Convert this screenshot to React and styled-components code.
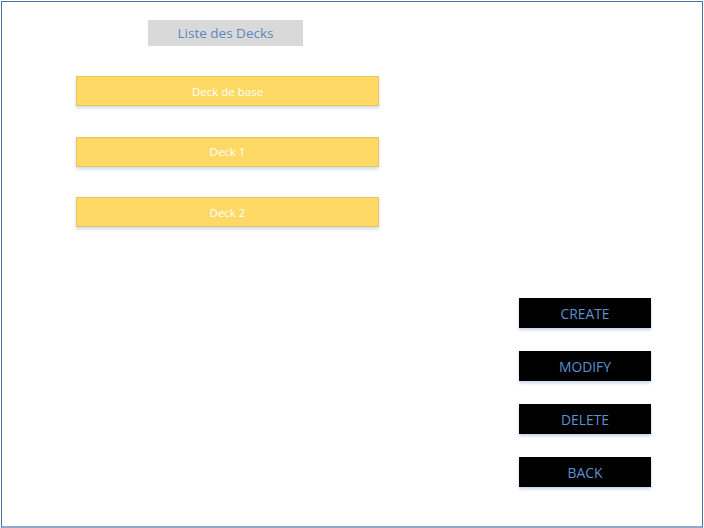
import React from "react";
import styled, { createGlobalStyle } from "styled-components";

const GlobalStyle = createGlobalStyle`
  html, body {
    margin: 0;
    padding: 0;
    background: #ffffff;
  }
  body {
    font-family: "Open Sans", "Liberation Sans", sans-serif;
  }
`;

const Frame = styled.div`
  box-sizing: border-box;
  width: 702px;
  height: 527px;
  margin: 1px 0 0 1px;
  border: 1px solid #4a74a0;
  border-bottom: 2px solid #8eaacb;
  display: flex;
  background: #fff;
`;

const LeftColumn = styled.div`
  width: 303px;
  margin-left: 74px;
  padding-top: 18px;
  display: flex;
  flex-direction: column;
  align-items: center;
`;

const Title = styled.div`
  width: 155px;
  height: 26px;
  margin-right: 4px;
  background: #d9d9d9;
  color: #5b87bd;
  font-size: 13.5px;
  display: flex;
  align-items: center;
  justify-content: center;
`;

const DeckList = styled.div`
  align-self: stretch;
  margin-top: 30px;
  display: flex;
  flex-direction: column;
  gap: 30.5px;
`;

const DeckBar = styled.div`
  box-sizing: border-box;
  height: 30px;
  background: #ffd966;
  border: 1px solid #e8c65e;
  box-shadow: 0 2px 3px rgba(90, 130, 190, 0.3);
  color: #ffffff;
  font-size: 11.5px;
  display: flex;
  align-items: center;
  justify-content: center;
`;

const ActionColumn = styled.div`
  margin-left: auto;
  margin-right: 51px;
  padding-top: 296px;
  display: flex;
  flex-direction: column;
  gap: 23px;
`;

const ActionButton = styled.div`
  width: 132px;
  height: 30px;
  background: #000000;
  box-shadow: 0 2px 3px rgba(90, 130, 190, 0.35);
  color: #5f90d0;
  font-size: 13.8px;
  display: flex;
  align-items: center;
  justify-content: center;
`;

const decks = ["Deck de base", "Deck 1", "Deck 2"];
const actions = ["CREATE", "MODIFY", "DELETE", "BACK"];

export default function App() {
  return (
    <>
      <GlobalStyle />
      <Frame>
        <LeftColumn>
          <Title>Liste des Decks</Title>
          <DeckList>
            {decks.map((name) => (
              <DeckBar key={name}>{name}</DeckBar>
            ))}
          </DeckList>
        </LeftColumn>
        <ActionColumn>
          {actions.map((label) => (
            <ActionButton key={label}>{label}</ActionButton>
          ))}
        </ActionColumn>
      </Frame>
    </>
  );
}
